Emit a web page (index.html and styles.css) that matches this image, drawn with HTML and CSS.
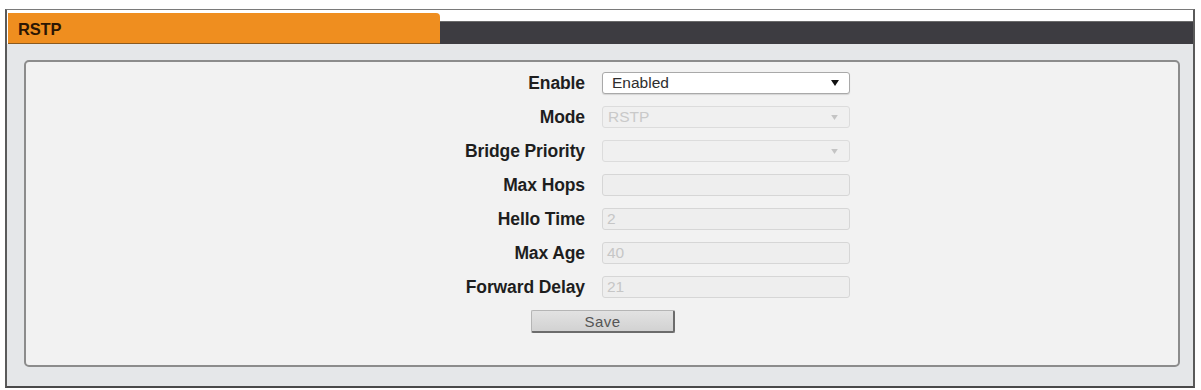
FILE: index.html
```html
<!DOCTYPE html>
<html>
<head>
<meta charset="utf-8">
<link rel="stylesheet" href="styles.css">
</head>
<body>
<div class="frame">
  <div class="header">
    <div class="tab">RSTP</div>
    <div class="bar"></div>
  </div>
  <div class="body">
    <div class="panel">
      <div class="form">
        <div class="label">Enable</div>
        <div class="field"><div class="select active"><span>Enabled</span><svg class="arrow" width="8" height="6" viewBox="0 0 8 6"><path d="M0 0H8L4 6Z" fill="#111"/></svg></div></div>
        <div class="label">Mode</div>
        <div class="field"><div class="select disabled"><span>RSTP</span><svg class="arrow" width="7" height="5" viewBox="0 0 8 6"><path d="M0 0H8L4 6Z" fill="#c4c4c4"/></svg></div></div>
        <div class="label">Bridge Priority</div>
        <div class="field"><div class="select disabled"><span></span><svg class="arrow" width="7" height="5" viewBox="0 0 8 6"><path d="M0 0H8L4 6Z" fill="#c4c4c4"/></svg></div></div>
        <div class="label">Max Hops</div>
        <div class="field"><div class="input"></div></div>
        <div class="label">Hello Time</div>
        <div class="field"><div class="input">2</div></div>
        <div class="label">Max Age</div>
        <div class="field"><div class="input">40</div></div>
        <div class="label">Forward Delay</div>
        <div class="field"><div class="input">21</div></div>
      </div>
      <div class="actions"><button class="save">Save</button></div>
    </div>
  </div>
</div>
</body>
</html>
```
FILE: styles.css
```css
html, body {
  margin: 0;
  padding: 0;
  background: #ffffff;
}
body {
  font-family: "Liberation Sans", Arial, sans-serif;
  padding: 9px 6px 0 5px;
}
.frame {
  width: 1186px;
  height: 376px;
  border-top: 1px solid #7a7a7a;
  border-left: 2px solid #5a5a5a;
  border-right: 2px solid #5a5a5a;
  border-bottom: 2px solid #4a4a4a;
  display: flex;
  flex-direction: column;
  background: #e5e7e9;
}
.header {
  display: flex;
  align-items: flex-end;
  height: 34px;
  background: #ffffff;
  flex: none;
}
.tab {
  width: 432px;
  height: 31px;
  margin-left: 1px;
  background: #ef8e1f;
  border-top-right-radius: 4px;
  box-sizing: border-box;
  padding: 8px 0 0 10px;
  font-weight: bold;
  font-size: 16.5px;
  letter-spacing: -0.2px;
  color: #2b1604;
  line-height: 17px;
  border-bottom: 1px solid #8a5a20;
}
.bar {
  flex: 1;
  height: 22px;
  background: #3d3c41;
  border-top: 1px solid #6a6a6a;
}
.body {
  flex: 1;
  padding: 16px 13px 19px 17px;
  display: flex;
}
.panel {
  flex: 1;
  background: #f2f2f2;
  border: 2px solid #8c8c8c;
  border-radius: 5px;
  padding-top: 10px;
}
.form {
  display: grid;
  grid-template-columns: 1fr 1fr;
  row-gap: 12px;
  align-items: center;
}
.label {
  text-align: right;
  padding-right: 17px;
  font-weight: bold;
  font-size: 17.5px;
  letter-spacing: -0.1px;
  color: #1e1e1e;
  line-height: 22px;
}
.field {
  display: flex;
}
.select, .input {
  width: 248px;
  height: 22px;
  box-sizing: border-box;
  border-radius: 3px;
  display: flex;
  align-items: center;
  font-size: 15.5px;
  line-height: 20px;
}
.select {
  justify-content: space-between;
  padding: 0 8px 0 9px;
}
.select.active {
  background: #ffffff;
  border: 1px solid #a9a9a9;
  box-shadow: 0 1px 1px rgba(0,0,0,0.12);
  color: #2e2e2e;
}
.select.active .arrow {
  margin-right: 2px;
}
.select.disabled {
  background: #f0f0f0;
  border: 1px solid #dcdcdc;
  color: #c9c9c9;
  padding-left: 5px;
}
.select.disabled .arrow {
  margin-right: 3px;
}
.input {
  background: #eeeeee;
  border: 1px solid #d6d6d6;
  color: #c6c6c6;
  padding: 0 4px;
}
.actions {
  display: flex;
  justify-content: center;
  margin-top: 12px;
  padding-left: 2px;
}
.save {
  width: 144px;
  height: 23px;
  font-family: "Liberation Sans", Arial, sans-serif;
  font-size: 15px;
  color: #555555;
  background: linear-gradient(#e2e2e2, #d2d2d2);
  border: 1px solid #b5b5b5;
  border-right: 2px solid #6c6c6c;
  border-bottom: 2px solid #6c6c6c;
  border-radius: 2px;
  padding: 0;
  letter-spacing: 0.5px;
}
```
